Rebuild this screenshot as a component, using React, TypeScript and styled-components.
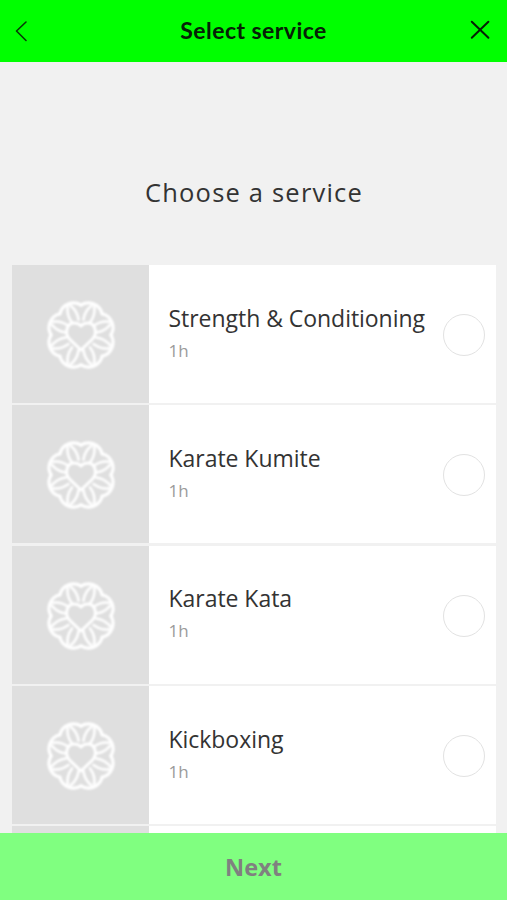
import React from "react";
import styled, { createGlobalStyle } from "styled-components";

const GlobalStyle = createGlobalStyle`
  * { box-sizing: border-box; }
  body { margin: 0; background: #f1f1f1; font-family: "Open Sans", sans-serif; }
  button { font: inherit; border: 0; padding: 0; cursor: pointer; }
`;

const Page = styled.div`
  display: flex;
  flex-direction: column;
  height: 900px;
  max-height: 100vh;
  overflow: hidden;
  background: #f1f1f1;
`;

const Header = styled.header`
  flex: none;
  display: grid;
  grid-template-columns: 54px 1fr 54px;
  align-items: center;
  height: 61.5px;
  background: #00ff00;
`;

const IconButton = styled.button`
  display: flex;
  height: 61px;
  width: 54px;
  background: transparent;
`;

const HeaderTitle = styled.h1`
  margin: 0;
  text-align: center;
  font: 700 23px/59px Lato, sans-serif;
  letter-spacing: 0.45px;
  color: #062006;
`;

const Content = styled.main`
  flex: 1;
  min-height: 0;
  overflow: hidden;
  padding: 0 11px 0 12px;
`;

const Heading = styled.h2`
  margin: 0;
  padding-top: 112.5px;
  height: 203.6px;
  text-align: center;
  font-weight: 400;
  font-size: 25.5px;
  line-height: 36px;
  letter-spacing: 1.2px;
  color: #333;
`;

const ServiceList = styled.ul`
  list-style: none;
  margin: 0;
  padding: 0;
  display: grid;
  gap: 2.4px;
`;

const ServiceRow = styled.li`
  display: flex;
  align-items: center;
  height: 137.9px;
  padding-right: 11px;
  background: #fff;
`;

const Thumbnail = styled.div`
  flex: none;
  display: flex;
  align-items: center;
  justify-content: center;
  width: 137px;
  height: 100%;
  padding-top: 2px;
  background: #dfdfdf;
`;

const Details = styled.div`
  flex: 1;
  padding: 0 0 0.4px 19.5px;
  white-space: nowrap;
`;

const ServiceName = styled.div`
  font-size: 23px;
  line-height: 34px;
  letter-spacing: -0.04px;
  color: #333;
`;

const Duration = styled.div`
  font-size: 17px;
  line-height: 32px;
  color: #9b9b9b;
`;

const Radio = styled.span`
  flex: none;
  width: 42px;
  height: 42px;
  margin-top: 2px;
  border: 1.5px solid #e2e2e2;
  border-radius: 50%;
`;

const NextButton = styled.button`
  flex: none;
  height: 67.5px;
  background: #80ff80;
  color: #808080;
  && { padding-top: 1px; font: 700 23.5px/66px "Open Sans", sans-serif; }
`;

const lobes = [22.5, 67.5, 112.5, 157.5, 202.5, 247.5, 292.5, 337.5];

const EmblemSvg = styled.svg`
  fill: none;
  stroke: #fff;
  stroke-linecap: round;
  stroke-linejoin: round;
  overflow: visible;
  filter: blur(0.9px);
`;

function Emblem() {
  return (
    <EmblemSvg width="74" height="74" viewBox="-37 -37 74 74">
      {lobes.map((angle) => (
        <g key={angle} transform={`rotate(${angle})`}>
          <path d="M-11.5 -27.6A14.2 14.2 0 0 1 11.5 -27.6" strokeWidth="3.2" />
          <path d="M-3.6 -15C-4.8 -20 -4.6 -26 -1.5 -31M3.6 -15C4.8 -20 4.6 -26 1.5 -31" strokeWidth="2.6" />
        </g>
      ))}
      <path d="M0 15L-11.5 4C-17 -2 -14 -12 -7 -12Q-2.5 -12 0 -9Q2.5 -12 7 -12C14 -12 17 -2 11.5 4Z" strokeWidth="3" />
    </EmblemSvg>
  );
}

const services = [
  { name: "Strength & Conditioning", duration: "1h" },
  { name: "Karate Kumite", duration: "1h" },
  { name: "Karate Kata", duration: "1h" },
  { name: "Kickboxing", duration: "1h" },
];

export default function App() {
  return (
    <Page>
      <GlobalStyle />
      <Header>
        <IconButton aria-label="Back">
          <svg width="54" height="61" fill="none" stroke="#073807" strokeWidth="1.6" strokeLinecap="round" strokeLinejoin="round">
            <path d="M26 22L16.5 31L26 40.5" />
          </svg>
        </IconButton>
        <HeaderTitle>Select service</HeaderTitle>
        <IconButton aria-label="Close">
          <svg width="54" height="61" fill="none" stroke="#052005" strokeWidth="2" strokeLinecap="round">
            <path d="M18.8 21.7L35.4 37.8M35.4 21.7L18.8 37.8" />
          </svg>
        </IconButton>
      </Header>
      <Content>
        <Heading>Choose a service</Heading>
        <ServiceList>
          {services.map((service) => (
            <ServiceRow key={service.name}>
              <Thumbnail><Emblem /></Thumbnail>
              <Details>
                <ServiceName>{service.name}</ServiceName>
                <Duration>{service.duration}</Duration>
              </Details>
              <Radio />
            </ServiceRow>
          ))}
          <ServiceRow>
            <Thumbnail />
          </ServiceRow>
        </ServiceList>
      </Content>
      <NextButton>Next</NextButton>
    </Page>
  );
}
